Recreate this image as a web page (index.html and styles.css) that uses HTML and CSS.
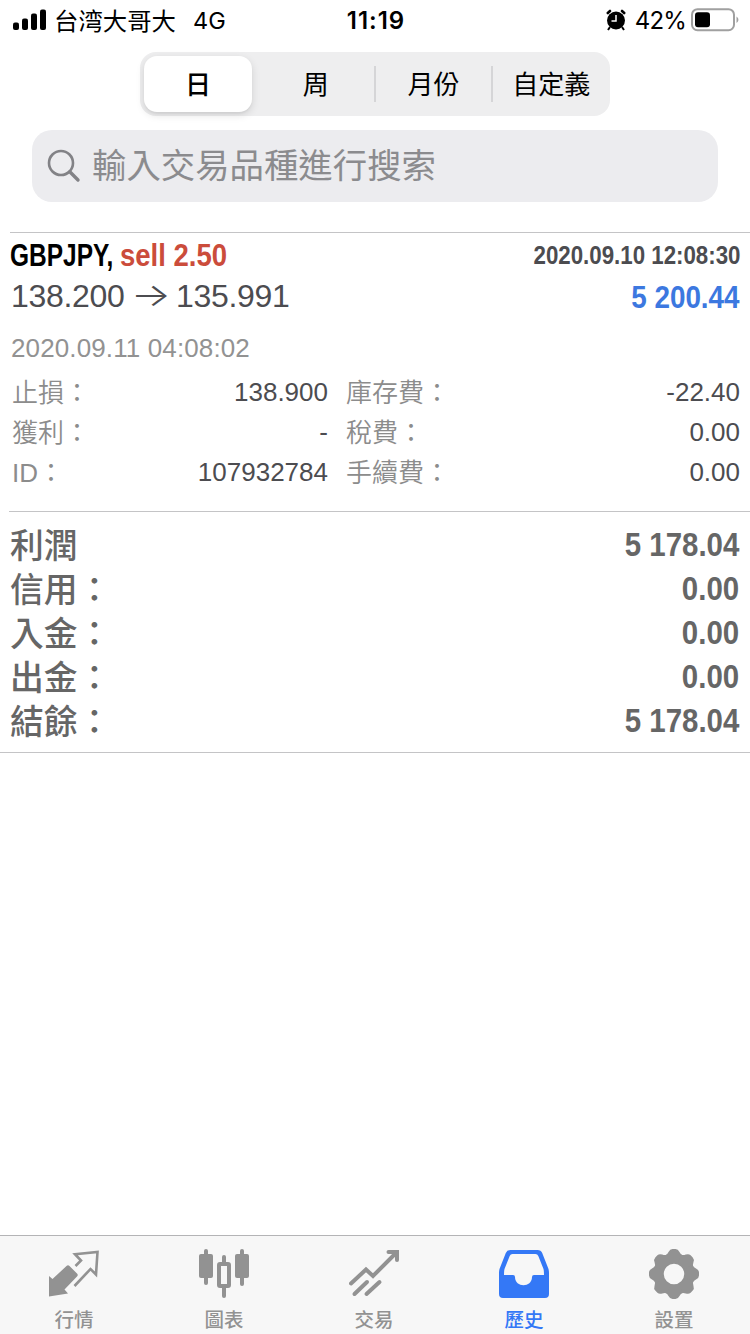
FILE: index.html
```html
<!DOCTYPE html>
<html lang="zh-Hant">
<head>
<meta charset="utf-8">
<title>歷史</title>
<link rel="stylesheet" href="styles.css">
</head>
<body>
<div class="app">
  <header class="status">
    <div class="status-left">
      <svg class="signal" width="34" height="22" viewBox="0 0 34 22"><rect x="0" y="13.500" width="6" height="7.500" rx="2"/><rect x="9" y="9.500" width="6" height="11.500" rx="2"/><rect x="18" y="4.500" width="6" height="16.500" rx="2"/><rect x="27" y="0.500" width="6" height="20.500" rx="2"/></svg>
      <span class="carrier">台湾大哥大</span>
      <span class="network">4G</span>
    </div>
    <div class="clock">11:19</div>
    <div class="status-right">
      <svg class="alarm" width="20" height="22" viewBox="0 0 20 22"><circle cx="10" cy="11.500" r="9"/><path d="M1.800 4L4 2M18.200 4L16 2" stroke="#000" stroke-width="2.600" stroke-linecap="round"/><path d="M4 18l-2 3M16 18l2 3" stroke="#000" stroke-width="2"/><path d="M10 6v6H5.500" fill="none" stroke="#fff" stroke-width="1.500"/></svg>
      <span class="percent">42%</span>
      <svg class="battery" width="48" height="24" viewBox="0 0 48 24"><rect x="1" y="1.200" width="42" height="21" rx="5.500" fill="none" stroke="#a0a0a0" stroke-width="2"/><rect x="4" y="4.200" width="15" height="15" rx="3"/><path d="M45.500 8.500c2.500 1.500 2.500 5 0 6.500z" fill="#a0a0a0"/></svg>
    </div>
  </header>

  <nav class="segments">
    <span class="segment selected">日</span>
    <span class="segment">周</span>
    <span class="segment divided">月份</span>
    <span class="segment divided">自定義</span>
  </nav>

  <div class="search">
    <svg width="34" height="34" viewBox="0 0 34 34" fill="none" stroke="#828286" stroke-linecap="round"><circle cx="14" cy="14" r="12" stroke-width="2.600"/><path d="M22.800 22.800L31 31" stroke-width="3.400"/></svg>
    <span>輸入交易品種進行搜索</span>
  </div>

  <section class="deal">
    <div class="deal-row title-row">
      <div class="title"><span class="symbol">GBPJPY,</span><span class="side">sell 2.50</span></div>
      <span class="open-time">2020.09.10 12:08:30</span>
    </div>
    <div class="deal-row price-row">
      <div class="prices"><span class="price">138.200</span><span class="arrow">→</span><span class="price">135.991</span></div>
      <span class="profit">5 200.44</span>
    </div>
    <div class="close-time">2020.09.11 04:08:02</div>
    <div class="details">
      <span class="label">止損：</span><span class="value">138.900</span><span class="label">庫存費：</span><span class="value">-22.40</span>
      <span class="label">獲利：</span><span class="value">-</span><span class="label">稅費：</span><span class="value">0.00</span>
      <span class="label">ID：</span><span class="value">107932784</span><span class="label">手續費：</span><span class="value">0.00</span>
    </div>
  </section>

  <section class="summary">
    <div class="sum-row"><span class="sum-label">利潤</span><span class="amount">5 178.04</span></div>
    <div class="sum-row"><span class="sum-label">信用：</span><span class="amount">0.00</span></div>
    <div class="sum-row"><span class="sum-label">入金：</span><span class="amount">0.00</span></div>
    <div class="sum-row"><span class="sum-label">出金：</span><span class="amount">0.00</span></div>
    <div class="sum-row"><span class="sum-label">結餘：</span><span class="amount">5 178.04</span></div>
  </section>

  <nav class="tabs">
    <div class="tab">
      <svg width="50" height="50" viewBox="0 0 50 50"><path d="M0 27L3.500 30 17.500 17q1.500-1.300 3 0L28 24.500q1.500 1.500 0 3L15.500 40.500l3.500 4L0 47.500z" fill="currentColor"/><path d="M26.500 17L32 11.500 26 5.200 48.500 3 47 25.500 41.500 20 25.500 37" fill="none" stroke="currentColor" stroke-width="2.600"/></svg>
      <span>行情</span>
    </div>
    <div class="tab">
      <svg width="50" height="50" viewBox="0 0 50 50" fill="currentColor"><rect x="0" y="5" width="14" height="24" rx="2"/><rect x="5" y="0" width="4" height="36" rx="2"/><rect x="36" y="5" width="14" height="24" rx="2"/><rect x="41" y="0" width="4" height="37" rx="2"/><rect x="20" y="15" width="10" height="22" rx="1" fill="none" stroke="currentColor" stroke-width="4"/><rect x="23" y="6" width="4" height="9" rx="2"/><rect x="23" y="37" width="4" height="12" rx="2"/></svg>
      <span>圖表</span>
    </div>
    <div class="tab">
      <svg width="50" height="50" viewBox="0 0 50 50" fill="none" stroke="currentColor" stroke-width="4" stroke-linecap="round"><path d="M2 34.500L17 20.500 24 27 47 4"/><path d="M39.500 3H48V11"/><path d="M5.500 45L18 33M17.500 45L30.500 33"/></svg>
      <span>交易</span>
    </div>
    <div class="tab active">
      <svg width="50" height="50" viewBox="0 0 50 50"><path fill="currentColor" fill-rule="evenodd" d="M11.500 1H38.500Q42 1 43.200 4L49.500 20Q50 22 50 24V45Q50 49 46 49H4Q0 49 0 45V24Q0 22 .5 20L6.800 4Q8 1 11.500 1zM13.500 5Q11.500 5 10.700 7L5.500 20Q5 22 5 26H14Q16 26 16 28C16 39 33 39 33 28Q33 26 35 26H45Q45 22 44.500 20L39.300 7Q38.500 5 36.500 5z"/></svg>
      <span>歷史</span>
    </div>
    <div class="tab">
      <svg width="50" height="50" viewBox="0 0 50 50">
        <defs><path id="tooth" d="M16 6.500Q18.500 5.500 19.500 3 21 0 23.500 0H26.500Q29 0 30.500 3 31.500 5.500 34 6.500L30 14H20z"/></defs>
        <circle cx="25" cy="25" r="15" fill="none" stroke="currentColor" stroke-width="9.500"/>
        <g fill="currentColor"><use href="#tooth"/><use href="#tooth" transform="rotate(45 25 25)"/><use href="#tooth" transform="rotate(90 25 25)"/><use href="#tooth" transform="rotate(135 25 25)"/><use href="#tooth" transform="rotate(180 25 25)"/><use href="#tooth" transform="rotate(225 25 25)"/><use href="#tooth" transform="rotate(270 25 25)"/><use href="#tooth" transform="rotate(315 25 25)"/></g>
      </svg>
      <span>設置</span>
    </div>
  </nav>
</div>
</body>
</html>
```
FILE: styles.css
```css
* { box-sizing: border-box; }
body {
  margin: 0;
  background: #fff;
  color: #000;
  font-family: "Liberation Sans", "Noto Sans CJK TC", sans-serif;
}
svg { display: block; flex: none; }
.app { display: flex; flex-direction: column; width: 750px; height: 1334px; overflow: hidden; }

.status {
  display: grid;
  grid-template-columns: 1fr auto 1fr;
  height: 40px;
  line-height: 38px;
  padding: 0 11px 0 13px;
  font-family: Inter, "Noto Sans CJK TC", sans-serif;
  font-size: 24px;
}
.status-left, .status-right { display: flex; align-items: center; height: 40px; }
.status-right { justify-content: flex-end; }
.carrier { margin-left: 7px; font-family: "Noto Sans CJK SC", sans-serif; font-size: 24.4px; }
.network { margin-left: 17px; padding-top: 2px; font-size: 23.5px; }
.clock { padding-top: 2px; font-weight: 600; letter-spacing: 1px; }
.alarm { margin-right: 9px; }
.percent { margin-right: 5px; padding-top: 2px; letter-spacing: -.8px; }

.segments {
  display: flex;
  align-self: center;
  width: 470px;
  height: 64px;
  margin-top: 12px;
  padding: 4px 0 4px 4px;
  border-radius: 16px;
  background: #eeeeef;
  font-size: 26px;
}
.segment {
  position: relative;
  display: flex;
  align-items: center;
  justify-content: center;
  width: 118px;
  height: 56px;
  padding-bottom: 3px;
  font-family: "Noto Sans CJK TC", sans-serif;
}
.selected {
  width: 108px;
  margin-right: 5px;
  border-radius: 13px;
  background: #fff;
  font-weight: 500;
  box-shadow: 0 3px 8px rgba(0,0,0,.12), 0 2px 2px rgba(0,0,0,.04);
}
.divided::before {
  content: "";
  position: absolute;
  top: 10px;
  left: -1px;
  width: 2px;
  height: 36px;
  background: #d5d5d7;
}

.search {
  display: flex;
  align-items: center;
  height: 72px;
  margin: 14px 32px 30px;
  padding: 0 15px;
  border-radius: 20px;
  background: #ececef;
  color: #8b8b8e;
  font: 34.4px/66px "Noto Sans CJK TC", sans-serif;
}
.search span { margin-left: 11px; margin-bottom: 6px; }

.deal {
  height: 279px;
  margin-left: 10px;
  padding-right: 10px;
  border-top: 1px solid #c4c4c6;
  color: #4c4c50;
}
.deal-row { display: flex; justify-content: space-between; }
.title-row { height: 44px; line-height: 45px; font-weight: 700; }
.title { display: flex; font-size: 32px; }
.symbol { width: 110px; color: #000; transform: scaleX(.765); transform-origin: left; }
.side { color: #cb4c3b; transform: scaleX(.86); transform-origin: left; }
.open-time { font-size: 26px; transform: scaleX(.857); transform-origin: right; white-space: nowrap; }
.price-row { height: 42px; line-height: 39px; font-size: 32px; }
.prices { display: flex; padding-left: 1px; }
.price { width: 115px; letter-spacing: -.3px; }
.arrow {
  width: 50px;
  font-family: Inter, sans-serif;
  font-weight: 300;
  line-height: 35px;
  text-align: center;
  transform: scaleX(1.32);
}
.profit { line-height: 41px; color: #3c78e0; font-weight: 700; transform: scaleX(.87); transform-origin: right; }
.close-time { height: 53px; line-height: 58px; padding-left: 1px; color: #929292; font-size: 26px; letter-spacing: .12px; }
.details {
  display: grid;
  grid-template-columns: 110px 208px 128px 284px;
  grid-auto-rows: 40px;
  line-height: 40px;
  font-size: 26px;
}
.label { padding: 1px 0 0 2px; color: #8c8c8c; font-weight: 350; line-height: 40px; white-space: nowrap; }
.label:nth-child(4n + 3) { padding-left: 18px; }
.value { text-align: right; }

.summary {
  height: 242px;
  border-top: 1px solid #c4c4c6;
  border-image: linear-gradient(to right, transparent 10px, #c4c4c6 10px) 1;
  padding-top: 10px;
  box-shadow: inset 0 -1px #c4c4c6;
  color: #666;
  font-size: 33.8px;
  font-weight: 700;
}
.sum-row { display: flex; justify-content: space-between; height: 44px; line-height: 44px; padding: 0 11px 0 10px; }
.sum-label { font-weight: 500; line-height: 48px; }
.amount { font-size: 34px; transform: scaleX(.866); transform-origin: right; }

.tabs {
  display: grid;
  grid-template-columns: repeat(5, 150px);
  height: 99px;
  margin-top: auto;
  border-top: 1px solid #b4b4b6;
  background: #f7f7f7;
  color: #929292;
}
.tab {
  display: flex;
  flex-direction: column;
  align-items: center;
  padding: 13px 2px 0 0;
  font: 500 19.5px/29px "Noto Sans CJK TC", sans-serif;
}
.tab span { margin-top: 5px; }
.active { color: #3478f6; }
```
